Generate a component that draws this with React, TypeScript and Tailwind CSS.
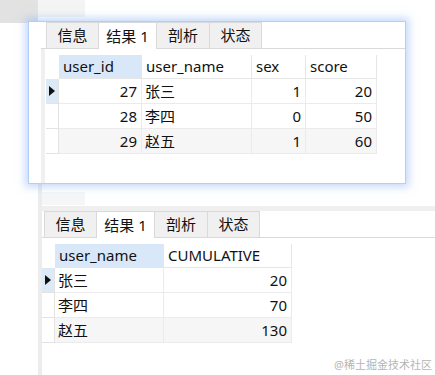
const font = { fontFamily: '"Noto Sans", "Noto Sans CJK SC", sans-serif' };

type Col = { name: string; width: number; right?: boolean };

interface GridProps {
  cols: Col[];
  rows: string[][];
  activeCol: number;
}

const Grid = ({ cols, rows, activeCol }: GridProps) => {
  return (
    <div className="flex flex-col w-fit text-[15px] text-[#111]">
      <div className="flex h-[24px]">
        <div className="w-[13px] shrink-0" />
        {cols.map((c, i) => (
          <div
            key={c.name}
            style={{ width: c.width }}
            className={`shrink-0 flex items-center pl-[4px] border-r border-b border-[#e6e6e6] leading-none ${
              i === activeCol ? "bg-[#d9e8f8]" : "bg-white"
            }`}
          >
            {c.name}
          </div>
        ))}
      </div>
      {rows.map((r, ri) => (
        <div
          key={ri}
          className={`flex h-[25px] ${ri === 2 ? "bg-[#f6f6f6]" : "bg-white"}`}
        >
          <div
            className={`w-[13px] shrink-0 flex items-center justify-center border-r border-b border-[#e3e3e3] ${
              ri === 0 ? "bg-[#dce9f7]" : "bg-white"
            }`}
          >
            {ri === 0 && (
              <svg width="6" height="10" viewBox="0 0 6 10">
                <path d="M0 0 L6 5 L0 10 Z" fill="#111" />
              </svg>
            )}
          </div>
          {r.map((v, ci) => (
            <div
              key={ci}
              style={{ width: cols[ci].width }}
              className={`shrink-0 flex items-center border-r border-b border-[#ebebeb] leading-none ${
                cols[ci].right ? "justify-end pr-[4px]" : "pl-[3px]"
              }`}
            >
              {v}
            </div>
          ))}
        </div>
      ))}
    </div>
  );
};

const Tabs = () => {
  const tabs = [
    { label: "信息", w: 53 },
    { label: "结果 1", w: 58, active: true },
    { label: "剖析", w: 53 },
    { label: "状态", w: 52 },
  ];
  return (
    <div className="flex h-[26px] items-end">
      {tabs.map((t) => (
        <div
          key={t.label}
          style={{ width: t.w }}
          className={`flex items-center justify-center text-[15px] text-[#111] leading-none border-t border-r border-[#d9d9d9] first:border-l ${
            t.active ? "bg-white h-[27px] -mb-px" : "bg-[#f0f0f0] h-full"
          }`}
        >
          {t.label}
        </div>
      ))}
    </div>
  );
};

export default function App() {
  return (
    <div className="relative w-[435px] h-[375px] bg-white overflow-hidden" style={font}>
      {/* background window bits */}
      <div className="absolute left-0 top-0 w-[38px] h-[23px] bg-[#e2e2e2]" />
      <div className="absolute left-[38px] top-0 w-[47px] h-[17px] bg-[#f4f4f4]" />
      <div className="absolute left-[38px] top-[180px] bottom-0 w-[4px] bg-[#ececec]" />
      <div className="absolute left-[42px] top-[192px] w-[43px] h-[13px] bg-[#f6f6f6]" />

      <div className="relative z-10 mt-[21px] ml-[28px] w-[378px] h-[163px] bg-white border border-[#b3cff7] shadow-[0_0_8px_3px_rgba(140,180,250,0.5)] flex">
        <div className="w-[12px] shrink-0" />
        <div className="flex flex-col flex-1">
          <div className="pt-[1px] pl-[5px] h-[27px] border-b border-[#d9d9d9] flex items-end">
            <Tabs />
          </div>
          <div className="flex flex-1">
            <div className="w-[4px] bg-[#f0f0f0] shrink-0" />
            <div className="pt-[6px] pl-px">
              <Grid
                cols={[
                  { name: "user_id", width: 83, right: true },
                  { name: "user_name", width: 110 },
                  { name: "sex", width: 54, right: true },
                  { name: "score", width: 71, right: true },
                ]}
                rows={[
                  ["27", "张三", "1", "20"],
                  ["28", "李四", "0", "50"],
                  ["29", "赵五", "1", "60"],
                ]}
                activeCol={0}
              />
            </div>
          </div>
        </div>
      </div>

      <div className="mt-[22px] ml-[42px] h-[5px] bg-[#efefef]" />
      <div className="ml-[42px] flex flex-col">
        <div className="pl-[2px] pt-px border-b border-[#d9d9d9] h-[27px] flex items-end">
          <Tabs />
        </div>
        <div className="pt-[6px]">
          <Grid
            cols={[
              { name: "user_name", width: 109 },
              { name: "CUMULATIVE", width: 128, right: true },
            ]}
            rows={[
              ["张三", "20"],
              ["李四", "70"],
              ["赵五", "130"],
            ]}
            activeCol={0}
          />
        </div>
      </div>

      <div className="absolute right-[3px] top-[359px] text-[11px] text-[#b5b5b5] leading-none">
        @稀土掘金技术社区
      </div>
    </div>
  );
}
